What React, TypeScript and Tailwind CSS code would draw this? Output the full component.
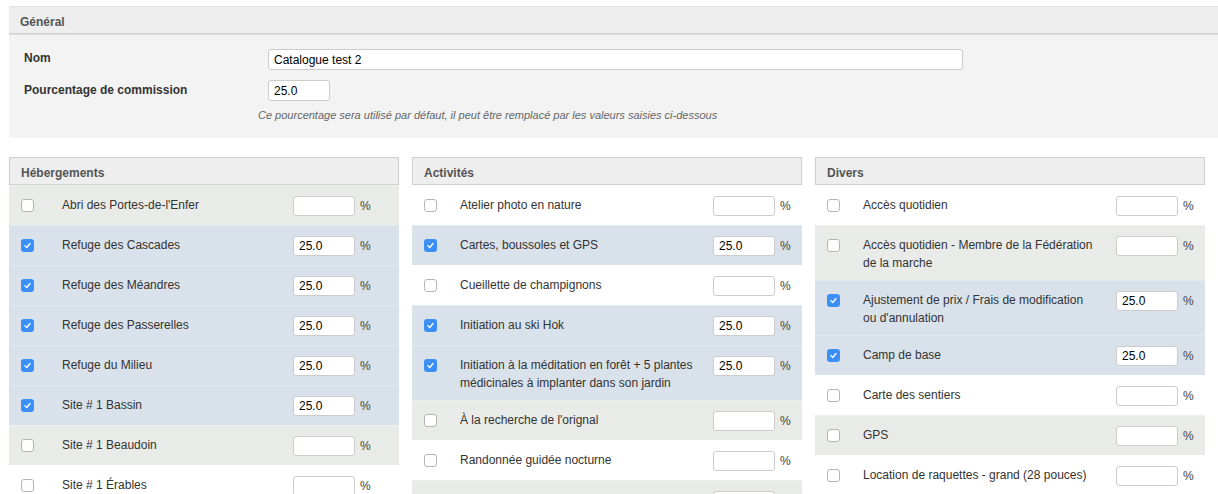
type Item = { label: string; checked?: boolean; bg: "white" | "grey" | "blue"; tall?: boolean }

const hebergements: Item[] = [
  { label: "Abri des Portes-de-l'Enfer", bg: "grey" },
  { label: "Refuge des Cascades", checked: true, bg: "blue" },
  { label: "Refuge des Méandres", checked: true, bg: "blue" },
  { label: "Refuge des Passerelles", checked: true, bg: "blue" },
  { label: "Refuge du Milieu", checked: true, bg: "blue" },
  { label: "Site # 1 Bassin", checked: true, bg: "blue" },
  { label: "Site # 1 Beaudoin", bg: "grey" },
  { label: "Site # 1 Érables", bg: "white" },
]

const activites: Item[] = [
  { label: "Atelier photo en nature", bg: "white" },
  { label: "Cartes, boussoles et GPS", checked: true, bg: "blue" },
  { label: "Cueillette de champignons", bg: "white" },
  { label: "Initiation au ski Hok", checked: true, bg: "blue" },
  {
    label: "Initiation à la méditation en forêt + 5 plantes médicinales à implanter dans son jardin",
    checked: true,
    bg: "blue",
    tall: true,
  },
  { label: "À la recherche de l'orignal", bg: "grey" },
  { label: "Randonnée guidée nocturne", bg: "white" },
  { label: "", bg: "grey" },
]

const divers: Item[] = [
  { label: "Accès quotidien", bg: "white" },
  { label: "Accès quotidien - Membre de la Fédération de la marche", bg: "grey", tall: true },
  { label: "Ajustement de prix / Frais de modification ou d'annulation", checked: true, bg: "blue", tall: true },
  { label: "Camp de base", checked: true, bg: "blue" },
  { label: "Carte des sentiers", bg: "white" },
  { label: "GPS", bg: "grey" },
  { label: "Location de raquettes - grand (28 pouces)", bg: "white" },
]

const rowBg = {
  white: "bg-white",
  grey: "bg-[#e8ebe8]",
  blue: "bg-[#d9e2ea]",
}

function Checkbox({ checked }: { checked?: boolean }) {
  if (checked) {
    return (
      <span className="flex h-[13px] w-[13px] items-center justify-center rounded-[3px] bg-[#3b8ff5]">
        <svg viewBox="0 0 10 10" className="h-[9px] w-[9px]">
          <path d="M2.2 5.2 L4.2 7.2 L7.8 2.8" fill="none" stroke="white" strokeWidth="1.5" strokeLinecap="round" strokeLinejoin="round" />
        </svg>
      </span>
    )
  }
  return <span className="block h-[13px] w-[13px] rounded-[3px] border border-[#b5b5b5] bg-white" />
}

function Panel({ title, items, labelCol, inputCol }: { title: string; items: Item[]; labelCol: string; inputCol: string }) {
  return (
    <div className="w-[390px] shrink-0">
      <div className="h-[28px] border border-[#d0d0d0] bg-[#eeeeee] px-[11px] pt-[6px] text-[12px] font-bold text-[#555] shadow-[0_1px_1px_rgba(0,0,0,0.08)]">
        {title}
      </div>
      <div>
        {items.map((it, i) => (
          <div
            key={i}
            className={`flex items-start border-t border-[#ffffff40] pt-[10px] ${rowBg[it.bg]} ${it.tall ? "h-[55px]" : "h-[40px]"}`}
          >
            <div className={`${labelCol} shrink-0 pl-[12px] pt-[3px]`}>
              <Checkbox checked={it.checked} />
            </div>
            <div className={`${inputCol} shrink-0 pr-[18px] text-[12px] leading-[18px] text-[#333]`}>{it.label}</div>
            <div className="flex items-center gap-[5px]">
              <input
                readOnly
                value={it.checked ? "25.0" : ""}
                className="h-[20px] w-[62px] rounded-[3px] border border-[#cccccc] bg-white px-[5px] text-[12px] text-black outline-none"
              />
              <span className="pt-[1px] text-[12px] text-[#444]">%</span>
            </div>
          </div>
        ))}
      </div>
    </div>
  )
}

export default function App() {
  return (
    <div className="h-[494px] w-[1218px] overflow-hidden bg-white pt-[6px] font-['Liberation_Sans',Arial,sans-serif]">
      <div className="ml-[9px] w-[1220px] border-t border-[#e3e3e3] bg-[#f3f3f3]">
        <div className="h-[27px] border-b border-[#d2d2d2] bg-[#eeeeee] pl-[11px] pt-[6px] text-[12px] font-bold text-[#555] shadow-[0_1px_1px_rgba(0,0,0,0.08)]">
          Général
        </div>
        <div className="pb-[14px] pt-[15px]">
          <div className="flex items-center">
            <div className="w-[259px] pb-[3px] pl-[15px] text-[12px] font-bold text-[#333]">Nom</div>
            <input
              readOnly
              value="Catalogue test 2"
              className="h-[21px] w-[695px] rounded-[3px] border border-[#cccccc] bg-white px-[5px] text-[12px] text-black outline-none"
            />
          </div>
          <div className="mt-[10px] flex items-center">
            <div className="w-[259px] pb-[2px] pl-[15px] text-[12px] font-bold text-[#333]">Pourcentage de commission</div>
            <input
              readOnly
              value="25.0"
              className="h-[21px] w-[62px] rounded-[3px] border border-[#cccccc] bg-white px-[5px] text-[12px] text-black outline-none"
            />
          </div>
          <div className="mt-[6px] pl-[249px] text-[11px] italic text-[#666]">
            Ce pourcentage sera utilisé par défaut, il peut être remplacé par les valeurs saisies ci-dessous
          </div>
        </div>
      </div>

      <div className="ml-[9px] mt-[19px] flex gap-[13px]">
        <Panel title="Hébergements" items={hebergements} labelCol="w-[53px]" inputCol="w-[231px]" />
        <Panel title="Activités" items={activites} labelCol="w-[48px]" inputCol="w-[253px]" />
        <Panel title="Divers" items={divers} labelCol="w-[48px]" inputCol="w-[253px]" />
      </div>
    </div>
  )
}
